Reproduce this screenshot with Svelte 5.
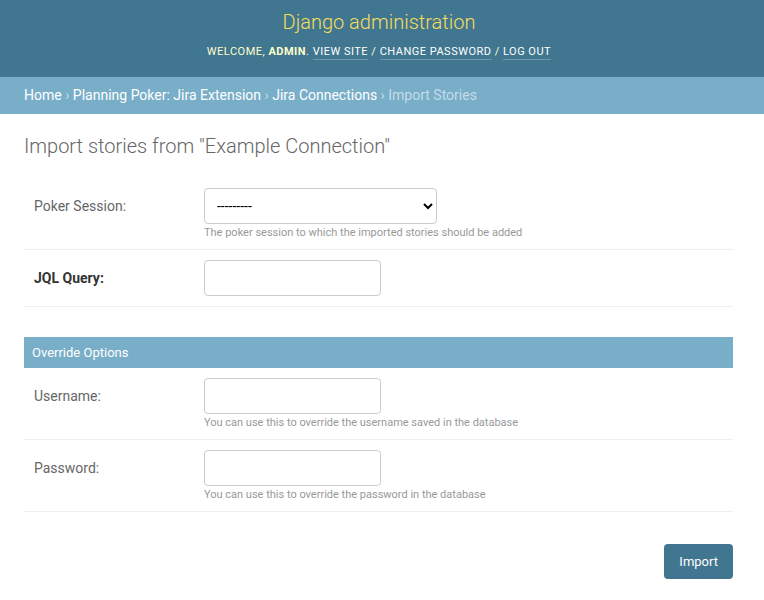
<script>
    let session = $state("")
    let jql = $state("")
    let username = $state("")
    let password = $state("")
</script>

<div id="header">
    <div class="branding">Django administration</div>
    <div class="user-tools">
        Welcome, <strong>admin</strong>.
        <a href="#site">View site</a> /
        <a href="#password">Change password</a> /
        <a href="#logout">Log out</a>
    </div>
</div>

<div class="breadcrumbs">
    <a href="#home">Home</a> ›
    <a href="#app">Planning Poker: Jira Extension</a> ›
    <a href="#connections">Jira Connections</a> ›
    Import Stories
</div>

<div class="content">
    <h1>Import stories from "Example Connection"</h1>
    <form onsubmit={(e) => e.preventDefault()}>
        <div class="row">
            <label for="session">Poker Session:</label>
            <div class="field">
                <select id="session" bind:value={session}>
                    <option value="">---------</option>
                </select>
                <div class="help">The poker session to which the imported stories should be added</div>
            </div>
        </div>
        <div class="row">
            <label class="required" for="jql">JQL Query:</label>
            <div class="field">
                <input id="jql" type="text" bind:value={jql} />
            </div>
        </div>

        <h2>Override Options</h2>
        <div class="row">
            <label for="username">Username:</label>
            <div class="field">
                <input id="username" type="text" bind:value={username} />
                <div class="help">You can use this to override the username saved in the database</div>
            </div>
        </div>
        <div class="row">
            <label for="password">Password:</label>
            <div class="field">
                <input id="password" type="password" bind:value={password} />
                <div class="help">You can use this to override the password in the database</div>
            </div>
        </div>

        <div class="submit-row">
            <button type="submit">Import</button>
        </div>
    </form>
</div>

<style>
    :global(body) {
        margin: 0;
        font-family: Roboto, "Liberation Sans", sans-serif;
        font-size: 14px;
        color: #333;
        background: #fff;
    }

    #header {
        background: #417690;
        color: #ffc;
        padding: 10px 46px 10px 40px;
        height: 57px;
        text-align: center;
    }

    .branding {
        font-size: 20px;
        font-weight: 300;
        line-height: 24px;
        color: #f5dd5d;
    }

    .user-tools {
        margin-top: 8px;
        font-size: 11px;
        font-weight: 400;
        letter-spacing: 0.5px;
        line-height: 19px;
        text-transform: uppercase;
    }

    .user-tools strong {
        font-weight: 700;
    }

    .user-tools a {
        color: #fff;
        text-decoration: none;
        padding-bottom: 1px;
        border-bottom: 1px solid rgba(255, 255, 255, 0.25);
    }

    .breadcrumbs {
        background: #79aec8;
        color: #c4dce8;
        padding: 10px 24px;
        line-height: 17px;
    }

    .breadcrumbs a {
        color: #fff;
        text-decoration: none;
    }

    .content {
        padding: 20px 31px 0 24px;
    }

    h1 {
        margin: 0 0 20px;
        font-size: 20px;
        font-weight: 300;
        line-height: 24px;
        color: #666;
    }

    .row {
        display: flex;
        padding: 10px;
        border-bottom: 1px solid #eee;
    }

    label {
        width: 160px;
        padding: 9px 10px 0 0;
        color: #666;
        line-height: 18px;
    }

    label.required {
        color: #333;
        font-weight: 700;
    }

    .field {
        display: flex;
        flex-direction: column;
        align-items: flex-start;
    }

    input {
        box-sizing: border-box;
        width: 177px;
        height: 36px;
        padding: 5px 6px;
        border: 1px solid #ccc;
        border-radius: 4px;
        font: inherit;
    }

    select {
        box-sizing: border-box;
        width: 233px;
        height: 36px;
        padding: 6px 8px;
        border: 1px solid #ccc;
        border-radius: 4px;
        background: #fff;
        color: #000;
        font-family: inherit;
        font-size: 14px;
    }

    .help {
        margin-top: 2px;
        font-size: 11px;
        line-height: 13px;
        color: #999;
    }

    h2 {
        margin: 30px 0 0;
        padding: 8px;
        background: #79aec8;
        color: #fff;
        font-size: 13px;
        font-weight: 400;
        line-height: 15px;
    }

    .submit-row {
        display: flex;
        justify-content: flex-end;
        margin-top: 32px;
    }

    button {
        box-sizing: border-box;
        height: 35px;
        padding: 0 15px;
        border: none;
        border-radius: 4px;
        background: #417690;
        color: #fff;
        font: inherit;
        font-size: 13px;
        cursor: pointer;
    }
</style>
